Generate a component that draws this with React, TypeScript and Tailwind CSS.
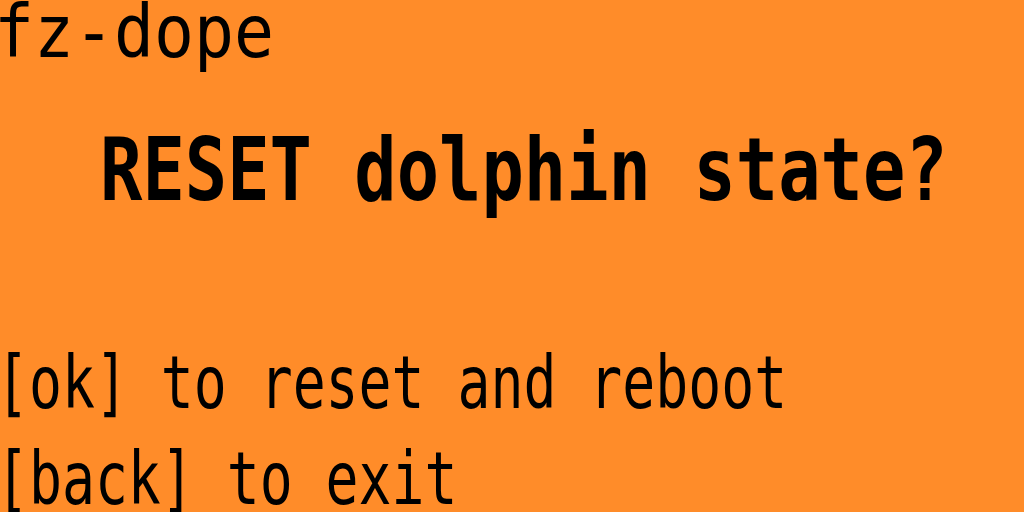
const mono = "font-['DejaVu_Sans_Mono','Liberation_Mono',monospace]";

export default function App() {
  return (
    <div className="w-[1024px] h-[512px] overflow-hidden bg-[#ff8c29] text-black">
      <div className={`flex flex-col ${mono}`}>
        {/* header */}
        <div className="h-[64px] leading-[64px] text-[73px] ml-[-6px] whitespace-pre">
          <span className="inline-block origin-left scale-x-[0.91]">fz-dope</span>
        </div>

        {/* title */}
        <div className="mt-[58px] h-[96px] leading-[96px] text-[88px] font-bold pl-[100px] whitespace-pre">
          <span className="inline-block origin-left scale-x-[0.8]">RESET dolphin state?</span>
        </div>

        {/* hints */}
        <div className="mt-[117px] flex flex-col text-[73px] leading-[96px] ml-[-4px] whitespace-pre">
          <span className="inline-block origin-left scale-x-[0.75]">[ok] to reset and reboot</span>
          <span className="inline-block origin-left scale-x-[0.75]">[back] to exit</span>
        </div>
      </div>
    </div>
  );
}
